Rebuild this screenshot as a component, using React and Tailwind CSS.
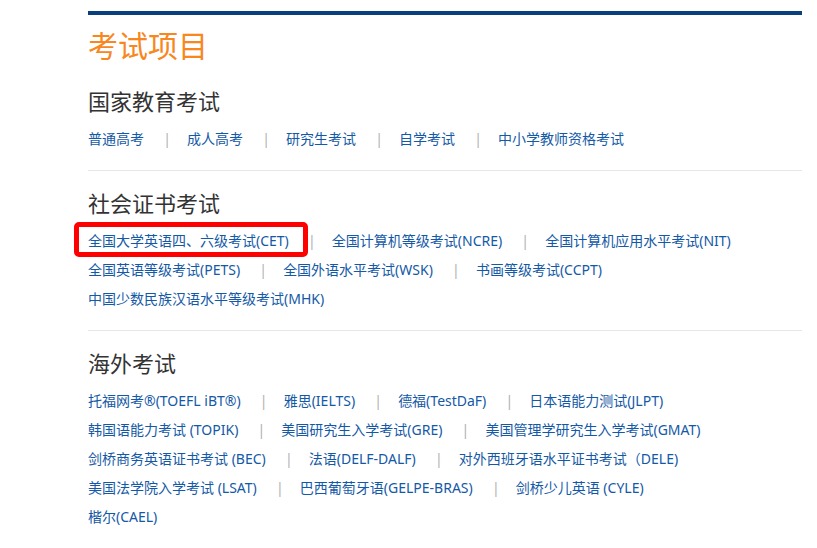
import React from "react";

const sections = [
  {
    title: "国家教育考试",
    rows: [["普通高考", "成人高考", "研究生考试", "自学考试", "中小学教师资格考试"]],
  },
  {
    title: "社会证书考试",
    rows: [
      ["全国大学英语四、六级考试(CET)", "全国计算机等级考试(NCRE)", "全国计算机应用水平考试(NIT)"],
      ["全国英语等级考试(PETS)", "全国外语水平考试(WSK)", "书画等级考试(CCPT)"],
      ["中国少数民族汉语水平等级考试(MHK)"],
    ],
  },
  {
    title: "海外考试",
    rows: [
      ["托福网考®(TOEFL iBT®)", "雅思(IELTS)", "德福(TestDaF)", "日本语能力测试(JLPT)"],
      ["韩国语能力考试 (TOPIK)", "美国研究生入学考试(GRE)", "美国管理学研究生入学考试(GMAT)"],
      ["剑桥商务英语证书考试 (BEC)", "法语(DELF-DALF)", "对外西班牙语水平证书考试（DELE)"],
      ["美国法学院入学考试 (LSAT)", "巴西葡萄牙语(GELPE-BRAS)", "剑桥少儿英语 (CYLE)"],
      ["楷尔(CAEL)"],
    ],
  },
];

function LinkRow({ items }) {
  return (
    <div className="flex h-[29px] items-center whitespace-nowrap text-[14px] leading-[29px]">
      {items.map((item, i) => (
        <React.Fragment key={item}>
          {i > 0 && (
            <span className="relative z-10 inline-block w-[43px] pl-[3px] text-center text-[#b0b0b0]">
              |
            </span>
          )}
          <span className="relative cursor-pointer text-[#1459a6] hover:underline">
            {item}
            {item.includes("(CET)") && (
              <span className="pointer-events-none absolute -left-[14px] -right-[19px] -top-[4px] -bottom-[2px] rounded-[5px] border-[5px] border-[#ff0000]" />
            )}
          </span>
        </React.Fragment>
      ))}
    </div>
  );
}

export default function App() {
  return (
    <div
      className="min-h-[548px] w-[817px] bg-white"
      style={{ fontFamily: '"Noto Sans", "Noto Sans CJK SC", sans-serif' }}
    >
      <div className="ml-[88px] w-[714px] pt-[11px]">
        <div className="h-[4px] bg-[#0a3f7e]" />
        <h1 className="mt-[11px] text-[30px] leading-[40px] font-normal text-[#f7871e]">
          考试项目
        </h1>
        <div className="mt-[20px]">
          {sections.map((section, idx) => (
            <div
              key={section.title}
              className={
                idx === 0
                  ? "pb-[17px]"
                  : "border-t border-[#e6e6e6] pt-[17px] pb-[17px]"
              }
            >
              <h2 className="mb-[8px] text-[22px] leading-[30px] font-normal text-[#333333]">
                {section.title}
              </h2>
              {section.rows.map((row, r) => (
                <LinkRow key={r} items={row} />
              ))}
            </div>
          ))}
        </div>
      </div>
    </div>
  );
}
